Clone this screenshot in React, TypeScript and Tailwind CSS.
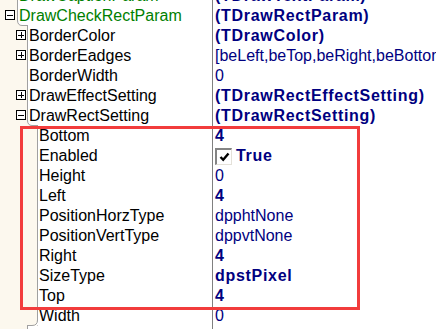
import React from 'react';

type Prop = {
  name: string;
  value: string;
  level: 1 | 2 | 3;
  green?: boolean;
  bold?: boolean;
  box?: 'plus' | 'minus';
  check?: boolean;
};

const CREAM = '#fcf8ee';
const LINE = '#a0a0a0';
const INDENT = { 1: 17, 2: 27, 3: 37 };
const GUTTER = { 1: 'w-[17px]', 2: 'w-[27px]', 3: 'w-[37px]' };
const BOX_OFFSET = { 1: 'ml-[5px]', 2: 'ml-[16px]', 3: 'ml-[26px]' };

const rows: Prop[] = [
  { name: 'DrawCaptionParam', value: '(TDrawTextParam)', level: 1, green: true, bold: true },
  { name: 'DrawCheckRectParam', value: '(TDrawRectParam)', level: 1, green: true, bold: true, box: 'minus' },
  { name: 'BorderColor', value: '(TDrawColor)', level: 2, bold: true, box: 'plus' },
  { name: 'BorderEadges', value: '[beLeft,beTop,beRight,beBottom]', level: 2, box: 'plus' },
  { name: 'BorderWidth', value: '0', level: 2 },
  { name: 'DrawEffectSetting', value: '(TDrawRectEffectSetting)', level: 2, bold: true, box: 'plus' },
  { name: 'DrawRectSetting', value: '(TDrawRectSetting)', level: 2, bold: true, box: 'minus' },
  { name: 'Bottom', value: '4', level: 3, bold: true },
  { name: 'Enabled', value: 'True', level: 3, bold: true, check: true },
  { name: 'Height', value: '0', level: 3 },
  { name: 'Left', value: '4', level: 3, bold: true },
  { name: 'PositionHorzType', value: 'dpphtNone', level: 3 },
  { name: 'PositionVertType', value: 'dppvtNone', level: 3 },
  { name: 'Right', value: '4', level: 3, bold: true },
  { name: 'SizeType', value: 'dpstPixel', level: 3, bold: true },
  { name: 'Top', value: '4', level: 3, bold: true },
  { name: 'Width', value: '0', level: 3 },
  { name: 'DrawStateSetting', value: '(TDrawStateSetting)', level: 2, bold: true, box: 'plus' },
];

function ExpandBox({ kind }: { kind: 'plus' | 'minus' }) {
  return (
    <div className="relative h-[10px] w-[10px] border border-black bg-white">
      <div className="absolute left-[1px] top-[3.5px] h-[1px] w-[6px] bg-black" />
      {kind === 'plus' && <div className="absolute left-[3.5px] top-[1px] h-[6px] w-[1px] bg-black" />}
    </div>
  );
}

function CheckBox() {
  return (
    <span className="flex h-[17px] w-[17px] items-center justify-center border-b border-l-2 border-r border-t-2 border-b-[#e4e1d9] border-l-[#848484] border-r-[#e4e1d9] border-t-[#848484] bg-white">
      <svg width="11" height="10" viewBox="0 0 11 10">
        <path d="M1.5 5 L4.2 7.8 L9.5 1.5" fill="none" stroke="#000" strokeWidth="2.4" />
      </svg>
    </span>
  );
}

// curved step in the gutter line where the indent changes
function Step({ from, to }: { from: number; to: number }) {
  if (from === to) return null;
  return (
    <svg className="pointer-events-none absolute bottom-0 left-0" width="60" height="6" viewBox="0 0 60 6">
      {to > from ? (
        <>
          <path d={`M${from} 0 H${from + 0.5} Q${from + 0.5} 5.5 ${from + 5} 5.5 V6 H${from} Z`} fill={CREAM} />
          <path d={`M${from + 0.5} 0 Q${from + 0.5} 5.5 ${from + 5} 5.5 H${to + 1}`} fill="none" stroke={LINE} />
        </>
      ) : (
        <>
          <path d={`M${from + 0.5} 0 Q${from + 0.5} 5.5 ${from - 5} 5.5 H${from + 1} V0 Z`} fill="#fff" />
          <path d={`M${to} 5.5 H${from - 5} Q${from + 0.5} 5.5 ${from + 0.5} 0`} fill="none" stroke={LINE} />
        </>
      )}
    </svg>
  );
}

function Row({ row, next }: { row: Prop; next?: Prop }) {
  return (
    <div className="relative flex h-[20px] leading-[20px]">
      <div className="flex w-[212px] shrink-0">
        <div className={`${GUTTER[row.level]} shrink-0 bg-[#fcf8ee] pt-[4px]`}>
          {row.box && (
            <div className={BOX_OFFSET[row.level]}>
              <ExpandBox kind={row.box} />
            </div>
          )}
        </div>
        <div
          className={`min-w-0 flex-1 overflow-hidden whitespace-nowrap border-l border-[#a0a0a0] bg-white pl-[1px] ${
            row.green ? 'text-[#008000]' : 'text-black'
          }`}
        >
          {row.name}
        </div>
      </div>
      <div
        className={`flex min-w-0 flex-1 items-center gap-[4px] overflow-hidden whitespace-nowrap border-l border-[#808080] bg-white pl-[2px] text-[#000080] ${
          row.bold ? 'font-bold tracking-[0.7px]' : ''
        }`}
      >
        {row.check && <CheckBox />}
        <span>{row.value}</span>
      </div>
      {next && <Step from={INDENT[row.level]} to={INDENT[next.level]} />}
    </div>
  );
}

export default function App() {
  return (
    <div className="relative h-[329px] w-[436px] overflow-hidden bg-white font-['Liberation_Sans',Arial,sans-serif] text-[16px]">
      <div className="-mt-[14px] flex flex-col">
        {rows.map((row, i) => (
          <Row key={row.name} row={row} next={rows[i + 1]} />
        ))}
      </div>

      {/* Highlight annotation */}
      <div className="pointer-events-none absolute left-[20px] top-[126px] h-[184px] w-[340px] border-[3px] border-[#f23c3c]" />
    </div>
  );
}
